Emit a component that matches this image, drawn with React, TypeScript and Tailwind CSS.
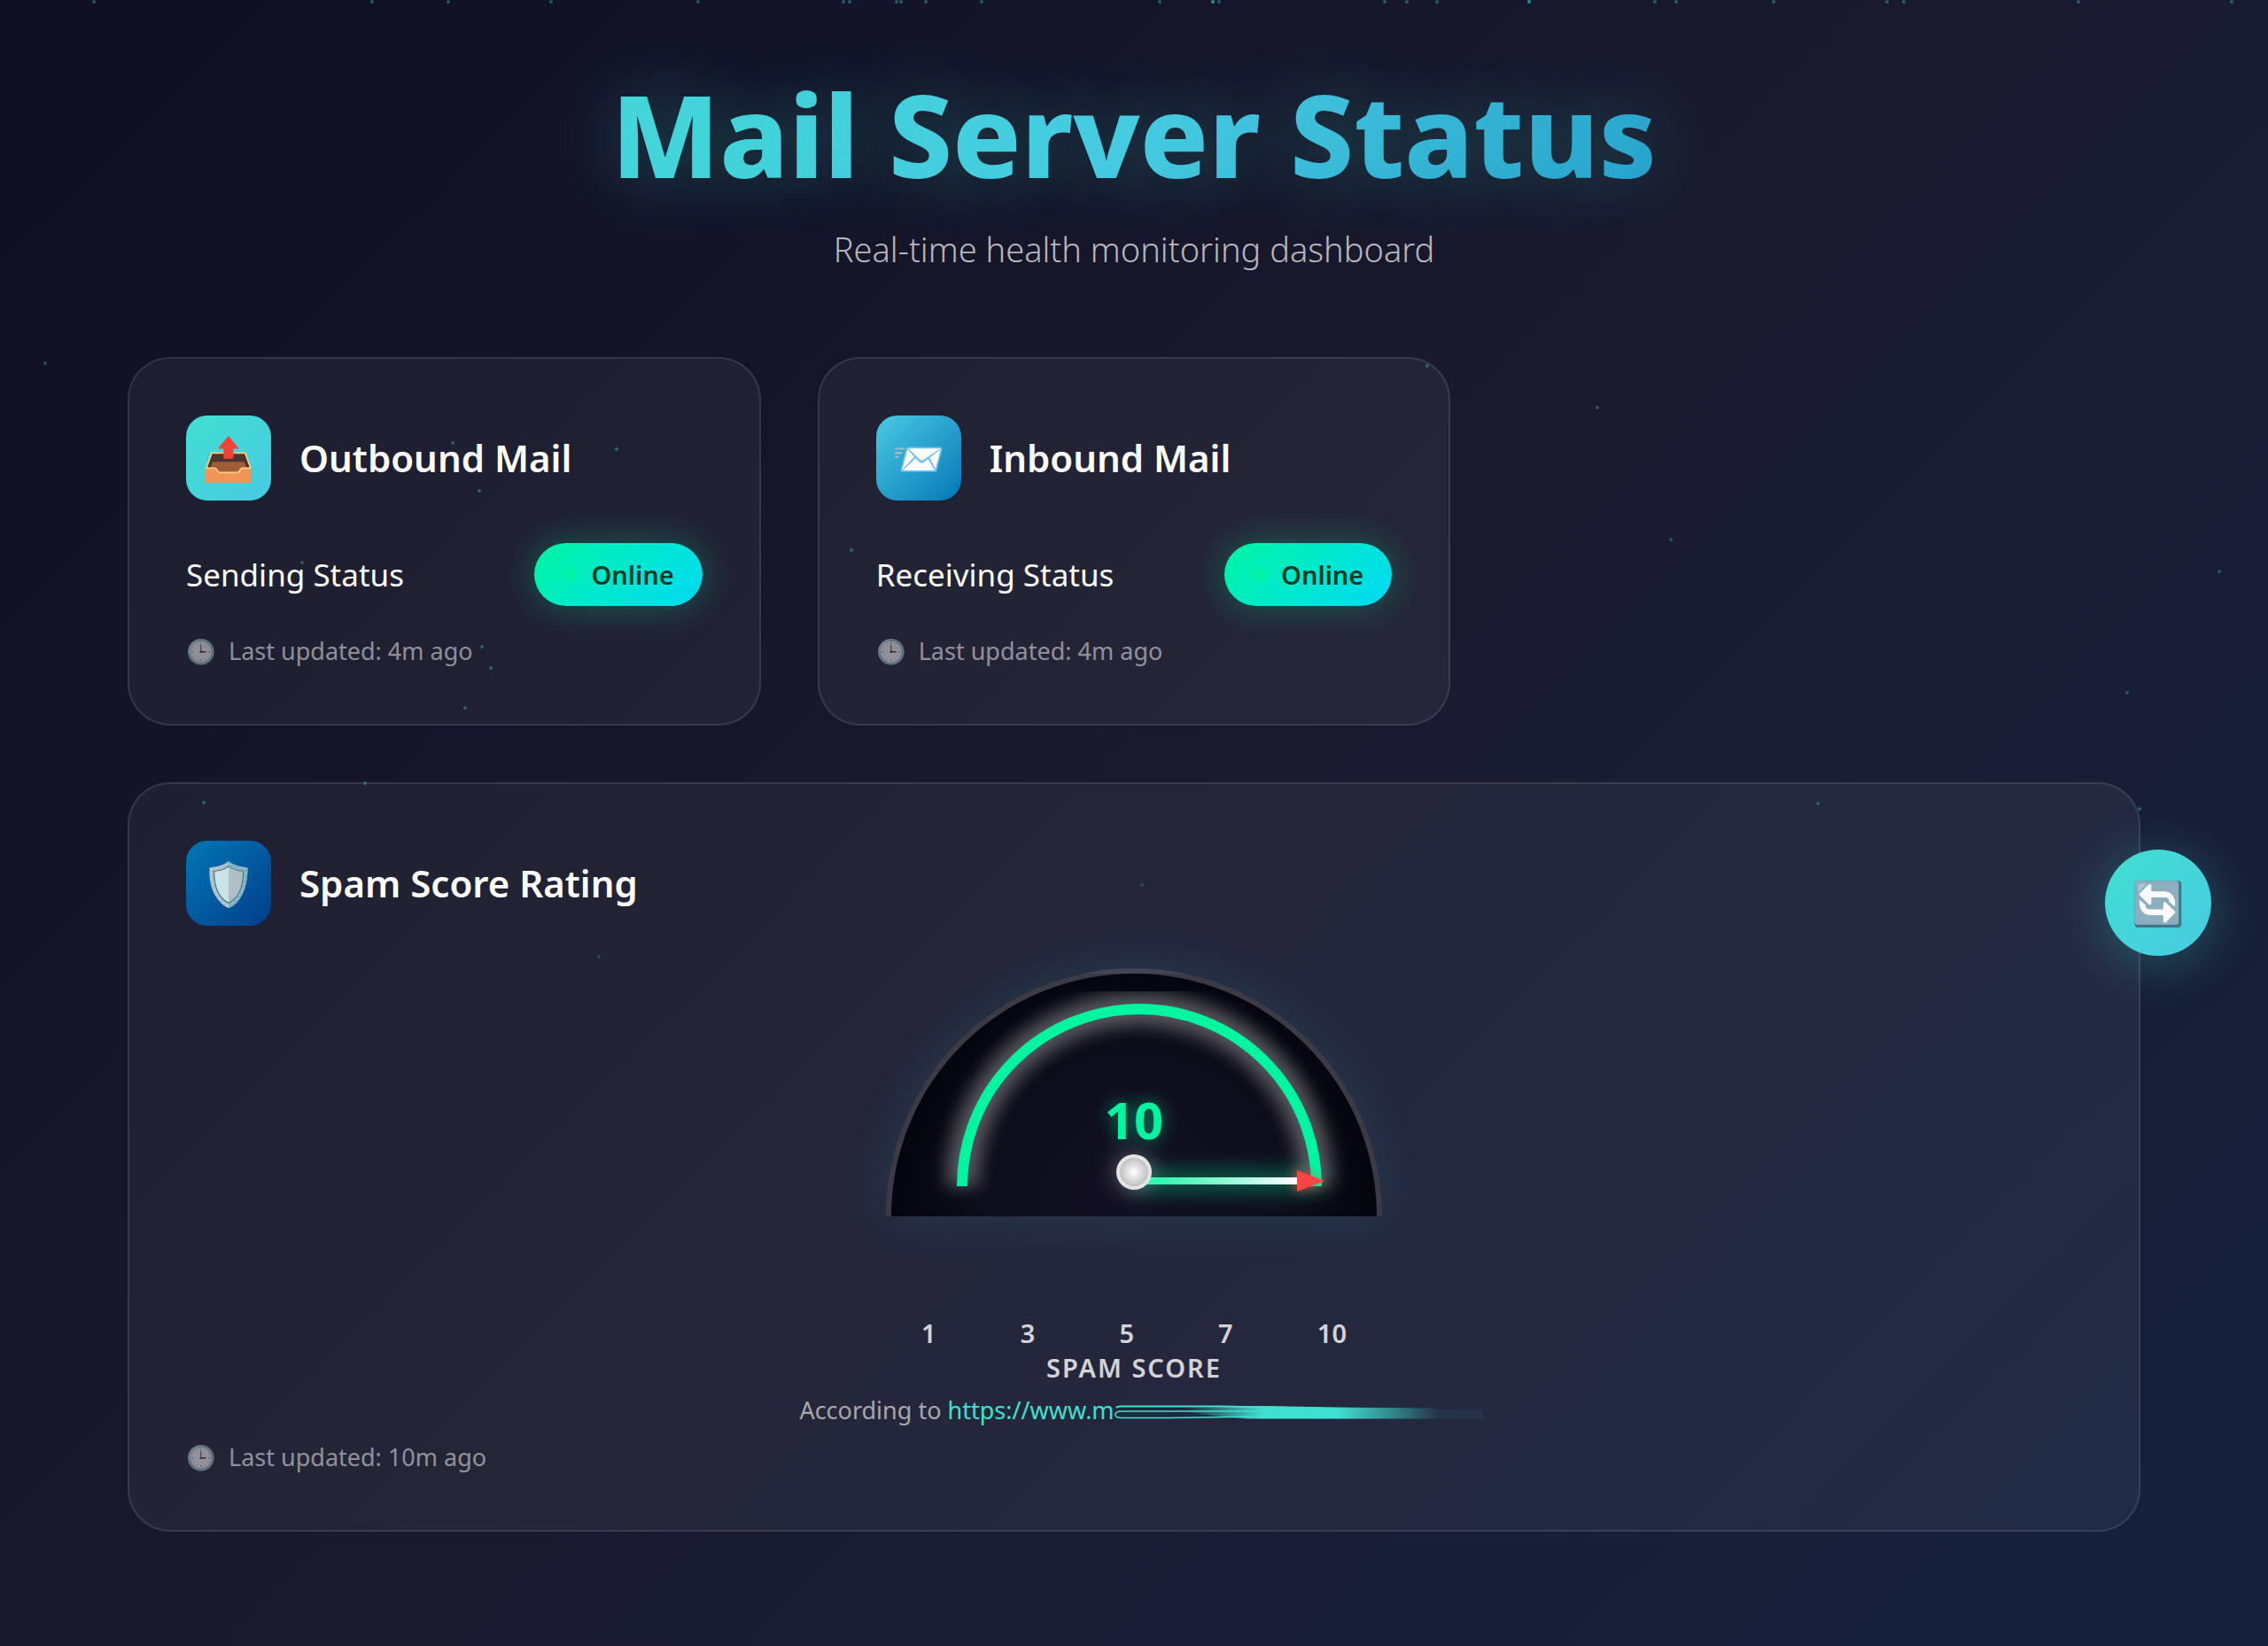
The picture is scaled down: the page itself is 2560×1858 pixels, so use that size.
import React from "react";

type Dot = { x: number; y: number; o: number };

const stars: Dot[] = [
  { x: 51, y: 410, o: 0.3 }, { x: 1803, y: 460, o: 0.3 }, { x: 1886, y: 609, o: 0.3 },
  { x: 2505, y: 645, o: 0.3 }, { x: 2401, y: 782, o: 0.3 }, { x: 2415, y: 913, o: 0.35 },
  { x: 2052, y: 907, o: 0.3 }, { x: 1289, y: 999, o: 0.2 }, { x: 676, y: 1080, o: 0.2 },
  { x: 230, y: 906, o: 0.35 }, { x: 412, y: 884, o: 0.35 }, { x: 525, y: 799, o: 0.35 },
  { x: 554, y: 754, o: 0.35 }, { x: 544, y: 730, o: 0.35 }, { x: 341, y: 635, o: 0.3 },
  { x: 541, y: 554, o: 0.35 }, { x: 511, y: 500, o: 0.35 }, { x: 696, y: 507, o: 0.35 },
  { x: 961, y: 621, o: 0.35 }, { x: 1611, y: 413, o: 0.35 },
  { x: 106, y: 2, o: 0.35 }, { x: 420, y: 2, o: 0.35 }, { x: 506, y: 2, o: 0.35 },
  { x: 622, y: 2, o: 0.35 }, { x: 788, y: 2, o: 0.35 }, { x: 952, y: 2, o: 0.35 },
  { x: 959, y: 2, o: 0.35 }, { x: 1012, y: 2, o: 0.35 }, { x: 1017, y: 2, o: 0.35 },
  { x: 1045, y: 2, o: 0.35 }, { x: 1108, y: 2, o: 0.35 }, { x: 1309, y: 2, o: 0.35 },
  { x: 1369, y: 2, o: 0.6 }, { x: 1376, y: 2, o: 0.35 }, { x: 1563, y: 2, o: 0.35 },
  { x: 1588, y: 2, o: 0.35 }, { x: 1622, y: 2, o: 0.35 }, { x: 1726, y: 2, o: 0.6 },
  { x: 1868, y: 2, o: 0.35 }, { x: 1892, y: 2, o: 0.35 }, { x: 2002, y: 2, o: 0.35 },
  { x: 2130, y: 2, o: 0.35 }, { x: 2149, y: 2, o: 0.35 }, { x: 2346, y: 2, o: 0.35 },
  { x: 2519, y: 2, o: 0.35 },
];

function Stars() {
  return (
    <div aria-hidden="true" className="pointer-events-none absolute inset-0 z-20 overflow-hidden">
      {stars.map((s) => (
        <span
          key={`${s.x}-${s.y}`}
          className="absolute size-1 -translate-1/2 rounded-full bg-[#40e0d0]"
          style={{ left: `${(s.x / 2560) * 100}%`, top: s.y, opacity: s.o }}
        />
      ))}
    </div>
  );
}

function CardHeader({ icon, tint, title }: { icon: string; tint: string; title: string }) {
  return (
    <div className="mb-12 flex items-center gap-8">
      <span aria-hidden="true" className={`flex size-24 items-center justify-center rounded-3xl text-5xl leading-none ${tint}`}>
        {icon}
      </span>
      <h2 className="text-[42px] leading-[58px] font-semibold text-white">{title}</h2>
    </div>
  );
}

function Updated({ text }: { text: string }) {
  return (
    <p className="flex items-center gap-3.5 text-[27px] leading-[37px] text-white/50">
      <span aria-hidden="true">🕒</span>
      {text}
    </p>
  );
}

const card = "rounded-[48px] border-2 border-white/10 bg-white/5 p-16";

function StatusCard(props: { icon: string; tint: string; title: string; label: string }) {
  return (
    <section className={card}>
      <CardHeader icon={props.icon} tint={props.tint} title={props.title} />
      <div className="mb-8 flex items-center justify-between">
        <span className="text-[35px] leading-[48px] text-white">{props.label}</span>
        <span className="flex items-center gap-4 rounded-full bg-linear-135 from-[#00f5a0] to-[#00d9f5] px-8 py-4 text-[29px] leading-[39px] font-semibold text-[#003d29] shadow-[0_0_40px_rgba(0,245,160,0.3)]">
          <span className="size-4 scale-120 rounded-full bg-[#00f5a0] opacity-60" />
          Online
        </span>
      </div>
      <Updated text="Last updated: 4m ago" />
    </section>
  );
}

function Gauge() {
  return (
    <svg viewBox="0 0 560 280" role="img" aria-label="Spam score 10 out of 10" className="block w-[560px] overflow-visible">
      <defs>
        <radialGradient id="face" gradientUnits="userSpaceOnUse" cx="280" cy="270" r="280">
          <stop offset="0" stopColor="#110f22" />
          <stop offset="0.55" stopColor="#0f0e1d" />
          <stop offset="0.85" stopColor="#080812" />
          <stop offset="1" stopColor="#04040d" />
        </radialGradient>
        <linearGradient id="needle" gradientUnits="userSpaceOnUse" x1="290" x2="464" y1="0" y2="0">
          <stop offset="0" stopColor="#10f5a6" />
          <stop offset="1" stopColor="#ffffff" />
        </linearGradient>
        <radialGradient id="hub">
          <stop offset="0" stopColor="#ffffff" />
          <stop offset="1" stopColor="#c0c0c0" />
        </radialGradient>
        <filter id="halo" filterUnits="userSpaceOnUse" x="-120" y="-120" width="800" height="520">
          <feGaussianBlur stdDeviation="26" />
        </filter>
        <filter id="arcBlur" filterUnits="userSpaceOnUse" x="0" y="-20" width="560" height="340">
          <feGaussianBlur stdDeviation="10" />
        </filter>
        <filter id="needleBlur" filterUnits="userSpaceOnUse" x="200" y="160" width="360" height="160">
          <feGaussianBlur stdDeviation="12" />
        </filter>
        <filter id="tipBlur" filterUnits="userSpaceOnUse" x="430" y="200" width="100" height="90">
          <feGaussianBlur stdDeviation="7" />
        </filter>
        <clipPath id="arcClip"><path d="M0 26H560V280H0Z" /></clipPath>
        <clipPath id="dial"><path d="M6 280A274 274 0 0 1 554 280Z" /></clipPath>
      </defs>
      <path d="M0 280A280 280 0 0 1 560 280Z" fill="#22a6c4" opacity="0.16" filter="url(#halo)" />
      <path d="M0 280A280 280 0 0 1 560 280Z" fill="#3b3a45" />
      <path d="M222.600 6A280 280 0 0 1 337.400 6Z" fill="#454456" />
      <path d="M6 280A274 274 0 0 1 554 280Z" fill="url(#face)" />
      <g clipPath="url(#dial)">
        <g clipPath="url(#arcClip)">
          <path d="M86 246A200 200 0 0 1 486 246" fill="none" stroke="#ffffff" strokeWidth="36" opacity="0.32" filter="url(#arcBlur)" />
        </g>
        <path d="M280 230H490V250H280Z" fill="#00f5a0" opacity="0.42" filter="url(#needleBlur)" />
      </g>
      <path d="M86 246A200 200 0 0 1 486 246" fill="none" stroke="#00f5a0" strokeWidth="12" />
      <path d="M462 228L495 240L462 252Z" fill="#ff4444" opacity="0.7" filter="url(#tipBlur)" />
      <path d="M290 236H466V244H290Z" fill="url(#needle)" />
      <path d="M464 228L495 240L464 252Z" fill="#ff4444" />
      <circle cx="280" cy="230" r="22" fill="#ffffff" opacity="0.3" filter="url(#needleBlur)" />
      <circle cx="280" cy="230" r="20" fill="#e4e4e4" />
      <circle cx="280" cy="230" r="16" fill="url(#hub)" />
      <text x="280" y="193" textAnchor="middle" className="fill-[#00f5a0] text-[58px] font-bold [text-shadow:0_0_20px_rgba(0,245,160,0.6)]">10</text>
    </svg>
  );
}

function SmearedUrl() {
  return (
    <svg viewBox="0 0 416 16" aria-hidden="true" className="mt-1 -mr-4 inline-block h-4 w-[416px] overflow-visible">
      <defs>
        <linearGradient id="smear" gradientUnits="userSpaceOnUse" x1="80" x2="416" y1="0" y2="0">
          <stop offset="0" stopColor="#40e0d0" stopOpacity="0" />
          <stop offset="0.26" stopColor="#40e0d0" stopOpacity="1" />
          <stop offset="0.51" stopColor="#40e0d0" stopOpacity="1" />
          <stop offset="0.7" stopColor="#40e0d0" stopOpacity="0.5" />
          <stop offset="0.85" stopColor="#40e0d0" stopOpacity="0.06" />
          <stop offset="1" stopColor="#40e0d0" stopOpacity="0.05" />
        </linearGradient>
      </defs>
      <path d="M2 3Q3 1.500 7 1.500H120L200 3" fill="none" stroke="#40e0d0" strokeWidth="2" />
      <path d="M166 7H8Q1 7 1 11Q1 14.500 8 14.500H60L166 13" fill="none" stroke="#40e0d0" strokeWidth="1.500" />
      <path d="M80 3L165 1L250 2.500L360 3.500L366 5H416V15.500H150L120 13L80 8Z" fill="url(#smear)" />
    </svg>
  );
}

export default function App() {
  return (
    <div className="relative min-h-screen bg-linear-135 from-[#0f0f23] via-[#1a1a2e] to-[#16213e] font-['Noto_Sans',sans-serif]">
      <Stars />
      <main className="mx-auto max-w-[2400px] px-16 py-16">
        <header className="mb-24 text-center">
          <h1 className="mb-4 bg-linear-135 from-[#40e0d0] via-[#48cae4] to-[#0077b6] bg-clip-text text-[128px] leading-[175px] font-extrabold text-transparent [text-shadow:0_0_80px_rgba(64,224,208,0.3)]">Mail Server Status</h1>
          <p className="text-[38px] leading-[52px] font-light text-white/70">Real-time health monitoring dashboard</p>
        </header>
        <div className="grid grid-cols-3 gap-16">
          <StatusCard icon="📤" tint="bg-linear-135 from-[#40e0d0] to-[#48cae4]" title="Outbound Mail" label="Sending Status" />
          <StatusCard icon="📨" tint="bg-linear-135 from-[#48cae4] to-[#0077b6]" title="Inbound Mail" label="Receiving Status" />
          <section className={`${card} col-span-full`}>
            <CardHeader icon="🛡️" tint="bg-linear-135 from-[#0077b6] to-[#023e8a]" title="Spam Score Rating" />
            <div className="mb-4 flex flex-col items-center">
              <Gauge />
              <div className="mt-28 flex w-[480px] justify-between text-[29px] leading-[39px] font-semibold text-white/80">
                <span>1</span>
                <span>3</span>
                <span>5</span>
                <span>7</span>
                <span>10</span>
              </div>
              <p className="text-[29px] leading-[39px] font-semibold tracking-[2px] text-white/80">SPAM SCORE</p>
              <p className="mt-2.5 flex items-center text-[27px] leading-[37px] whitespace-pre text-white/60">
                {"According to "}
                <a href="#report" className="flex items-center text-[#40e0d0]">
                  https://www.m
                  <SmearedUrl />
                </a>
              </p>
            </div>
            <Updated text="Last updated: 10m ago" />
          </section>
        </div>
      </main>
      <button
        type="button"
        aria-label="Refresh"
        className="absolute top-[959px] right-16 z-10 flex size-30 items-center justify-center rounded-full bg-linear-135 from-[#40e0d0] to-[#48cae4] text-5xl leading-none shadow-[0_8px_60px_rgba(64,224,208,0.3)]"
      >
        🔄
      </button>
    </div>
  );
}
